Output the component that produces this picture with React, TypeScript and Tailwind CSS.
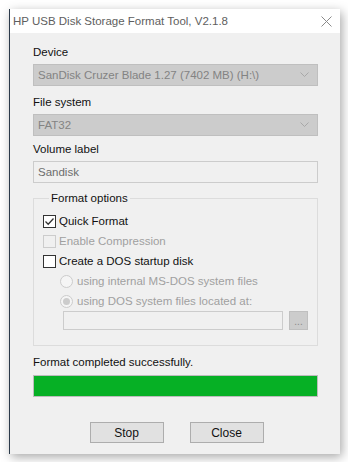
function Check({ checked, disabled }: { checked?: boolean; disabled?: boolean }) {
  return (
    <span
      className={
        'w-[13px] h-[13px] border flex items-center justify-center shrink-0 ' +
        (disabled ? 'border-[#cccccc] bg-[#f0f0f0]' : 'border-[#333333] bg-white')
      }
    >
      {checked && (
        <svg width="11" height="11" viewBox="0 0 11 11">
          <path d="M1.5 5.5 L4.2 8.2 L9.5 2.5" fill="none" stroke="#333" strokeWidth="1.3" />
        </svg>
      )}
    </span>
  );
}

function Radio({ dot }: { dot?: boolean }) {
  return (
    <span className="w-[13px] h-[13px] rounded-full border border-[#cccccc] bg-[#f5f5f5] flex items-center justify-center shrink-0">
      {dot && <span className="w-[7px] h-[7px] rounded-full bg-[#cccccc]" />}
    </span>
  );
}

function Combo({ value }: { value: string }) {
  return (
    <div className="h-[22px] border border-[#bfbfbf] bg-[#cccccc] flex items-center justify-between pl-[4px] pr-[8px] text-[#838383]">
      <span>{value}</span>
      <svg width="9" height="6" viewBox="0 0 9 6">
        <path d="M0.5 0.5 L4.5 4.5 L8.5 0.5" fill="none" stroke="#a8a8a8" strokeWidth="1" />
      </svg>
    </div>
  );
}

export default function App() {
  return (
    <div
      className="w-[348px] h-[462px] bg-white pl-[9px] pt-[9px] text-[11.5px] leading-[16px] text-[#111]"
      style={{ fontFamily: '"Liberation Sans", Arial, sans-serif' }}
    >
      <div className="w-[331px] h-[445px] bg-[#f0f0f0] border-l border-[#2b3a4a] shadow-[2px_3px_10px_rgba(0,0,0,0.35)] flex flex-col">
        {/* title bar */}
        <div className="h-[24px] bg-white flex items-center justify-between pl-[3px] pr-[8px]">
          <span className="text-[#5e5e5e] text-[11.5px]">HP USB Disk Storage Format Tool, V2.1.8</span>
          <svg width="11" height="11" viewBox="0 0 11 11">
            <path d="M0.5 0.5 L10.5 10.5 M10.5 0.5 L0.5 10.5" stroke="#8a8a8a" strokeWidth="1" />
          </svg>
        </div>

        <div className="pl-[23px] w-[308px] flex flex-col">
          <div className="mt-[11px]">Device</div>
          <div className="mt-[4px]">
            <Combo value="SanDisk Cruzer Blade 1.27 (7402 MB) (H:\)" />
          </div>
          <div className="mt-[8px]">File system</div>
          <div className="mt-[4px]">
            <Combo value="FAT32" />
          </div>
          <div className="mt-[5px]">Volume label</div>
          <div className="mt-[4px] h-[22px] border border-[#cccccc] bg-[#f0f0f0] flex items-center pl-[4px] text-[#6d6d6d]">
            Sandisk
          </div>

          <fieldset className="mt-[7px] border border-[#dcdcdc] pl-[9px] pb-[15px] pt-[5px]">
            <legend className="ml-[6px] px-[2px]">Format options</legend>
            <div className="h-[20px] flex items-center gap-[3px]">
              <Check checked />
              <span>Quick Format</span>
            </div>
            <div className="h-[20px] flex items-center gap-[3px] text-[#a0a0a0]">
              <Check disabled />
              <span>Enable Compression</span>
            </div>
            <div className="h-[20px] flex items-center gap-[3px]">
              <Check />
              <span>Create a DOS startup disk</span>
            </div>
            <div className="h-[20px] flex items-center gap-[4px] pl-[17px] text-[#a0a0a0]">
              <Radio />
              <span>using internal MS-DOS system files</span>
            </div>
            <div className="h-[20px] flex items-center gap-[4px] pl-[17px] text-[#a0a0a0]">
              <Radio dot />
              <span>using DOS system files located at:</span>
            </div>
            <div className="flex items-center pl-[20px] gap-[6px]">
              <div className="w-[220px] h-[19px] border border-[#cccccc] bg-[#f0f0f0]" />
              <div className="w-[19px] h-[19px] border border-[#bfbfbf] bg-[#cccccc] flex items-end justify-center text-[#8a8a8a] text-[10px] leading-[14px]">
                ...
              </div>
            </div>
          </fieldset>

          <div className="mt-[8px]">Format completed successfully.</div>
          <div className="mt-[5px] h-[22px] border border-[#bcbcbc] bg-[#06b025]" />

          <div className="mt-[25px] flex justify-center gap-[26px] pl-[2px]">
            <button className="w-[74px] h-[21px] border border-[#adadad] bg-[#e1e1e1] text-[12px]">Stop</button>
            <button className="w-[74px] h-[21px] border border-[#adadad] bg-[#e1e1e1] text-[12px]">Close</button>
          </div>
        </div>
      </div>
    </div>
  );
}
